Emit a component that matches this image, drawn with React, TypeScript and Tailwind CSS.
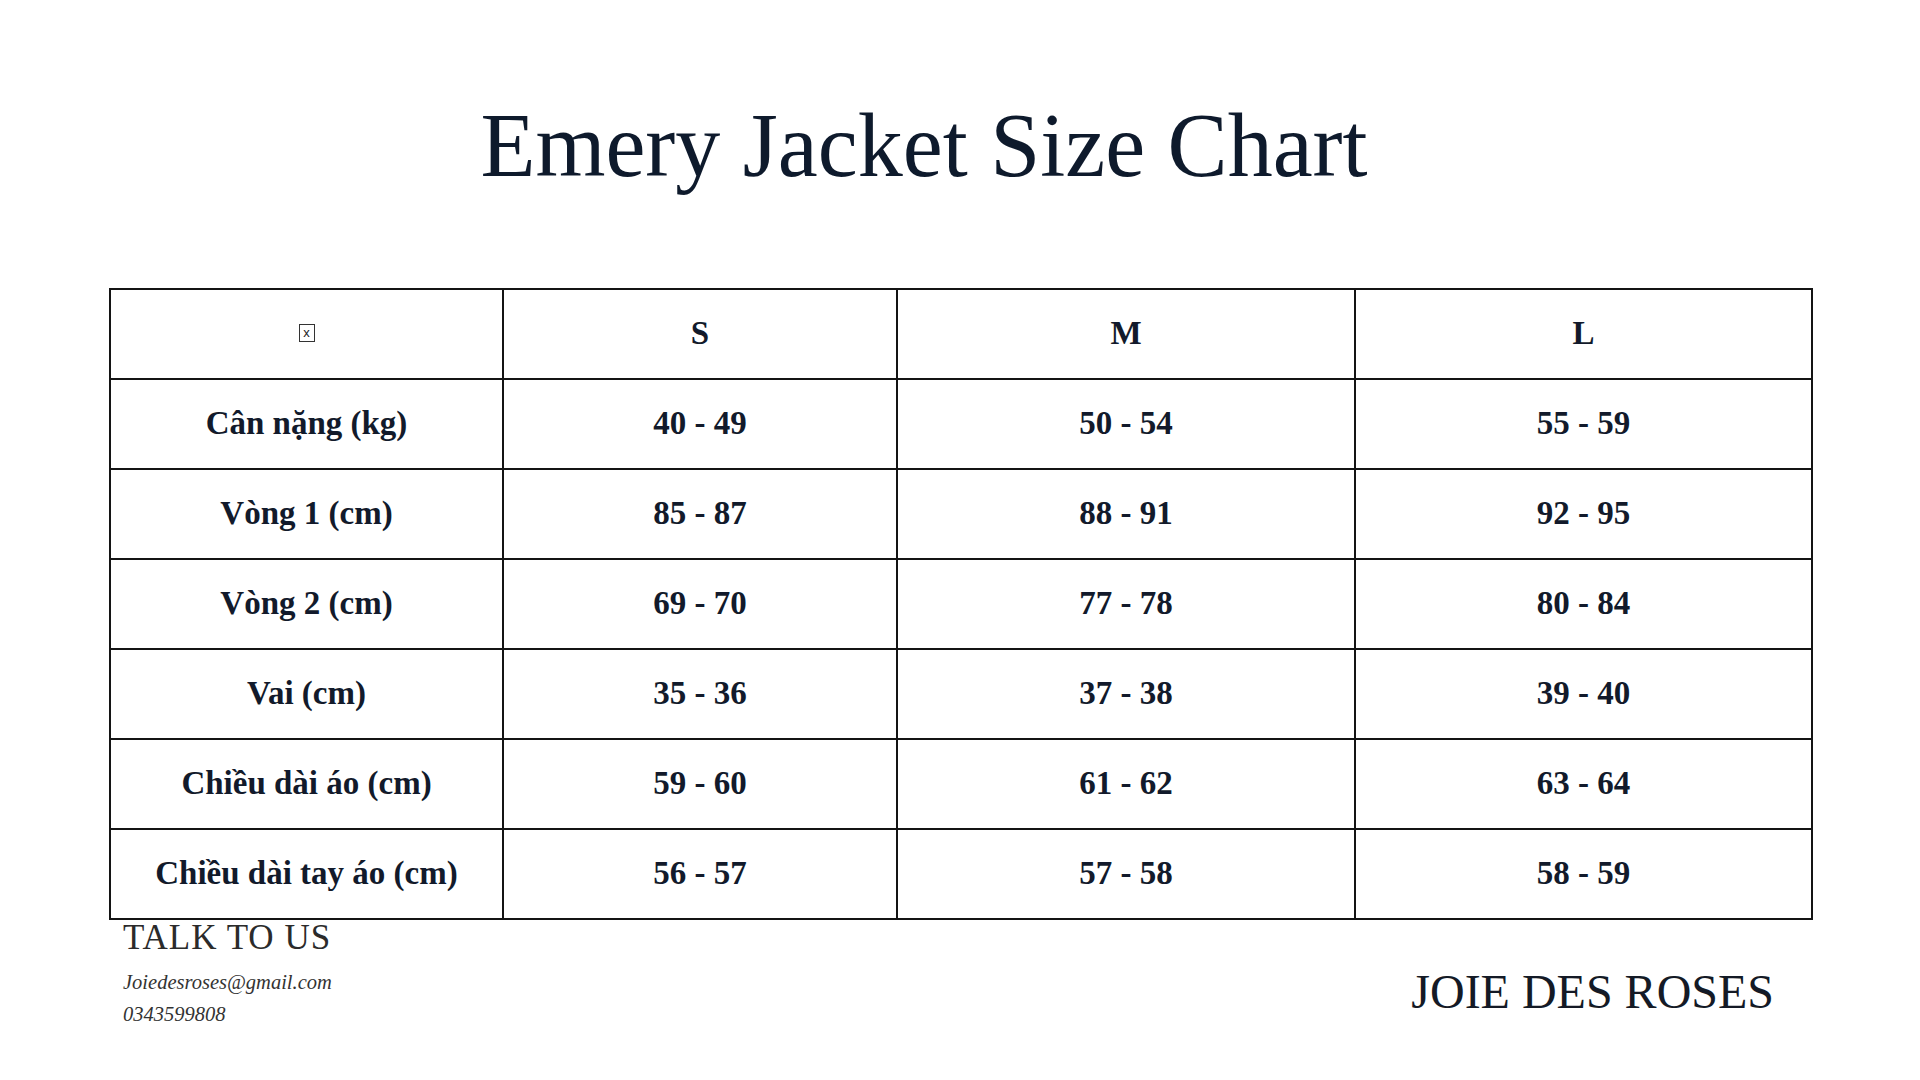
const rows: [string, string, string, string][] = [
  ['Cân nặng (kg)', '40 - 49', '50 - 54', '55 - 59'],
  ['Vòng 1 (cm)', '85 - 87', '88 - 91', '92 - 95'],
  ['Vòng 2 (cm)', '69 - 70', '77 - 78', '80 - 84'],
  ['Vai (cm)', '35 - 36', '37 - 38', '39 - 40'],
  ['Chiều dài áo (cm)', '59 - 60', '61 - 62', '63 - 64'],
  ['Chiều dài tay áo (cm)', '56 - 57', '57 - 58', '58 - 59'],
]

const serif = { fontFamily: "'Liberation Serif', 'Times New Roman', serif" }

export default function App() {
  return (
    <div className="w-[1920px] h-[1080px] bg-white overflow-hidden" style={serif}>
      <div className="pt-[101px] pr-[72px] flex justify-center">
        <h1 className="text-[90px] leading-none font-normal text-[#0e1a2c]">
          Emery Jacket Size Chart
        </h1>
      </div>

      <div className="mt-[97px] mx-auto w-[1702px]">
        <table className="w-full border-collapse table-fixed text-[#121a2b]">
          <colgroup>
            <col className="w-[393px]" />
            <col className="w-[394px]" />
            <col className="w-[458px]" />
            <col className="w-[457px]" />
          </colgroup>
          <thead>
            <tr className="h-[90px]">
              <th className="border-2 border-[#141414] align-middle">
                <span className="inline-flex items-center justify-center w-[16px] h-[18px] border border-[#333] text-[13px] leading-none font-normal text-[#222] font-['Liberation_Sans',sans-serif] -translate-y-[2px]">
                  x
                </span>
              </th>
              {['S', 'M', 'L'].map((s) => (
                <th key={s} className="border-2 border-[#141414] text-[33px] font-bold">
                  {s}
                </th>
              ))}
            </tr>
          </thead>
          <tbody>
            {rows.map((r) => (
              <tr key={r[0]} className="h-[90px]">
                {r.map((c, i) => (
                  <td key={i} className="border-2 border-[#141414] text-center text-[33px] font-bold">
                    {c}
                  </td>
                ))}
              </tr>
            ))}
          </tbody>
        </table>

        {/* footer */}
        <div className="flex justify-between">
          <div className="pl-[14px]">
            <div className="text-[35px] leading-none tracking-[1px] text-[#2b2b2b] font-light">TALK TO US</div>
            <div className="mt-[11px] text-[20.5px] leading-[32px] italic text-[#333]">Joiedesroses@gmail.com</div>
            <div className="text-[20.5px] leading-[32px] italic text-[#333]">0343599808</div>
          </div>
          <div className="pr-[37px] pt-[48px]">
            <div className="text-[48px] leading-none text-[#141a26]">JOIE DES ROSES</div>
          </div>
        </div>
      </div>
    </div>
  )
}
